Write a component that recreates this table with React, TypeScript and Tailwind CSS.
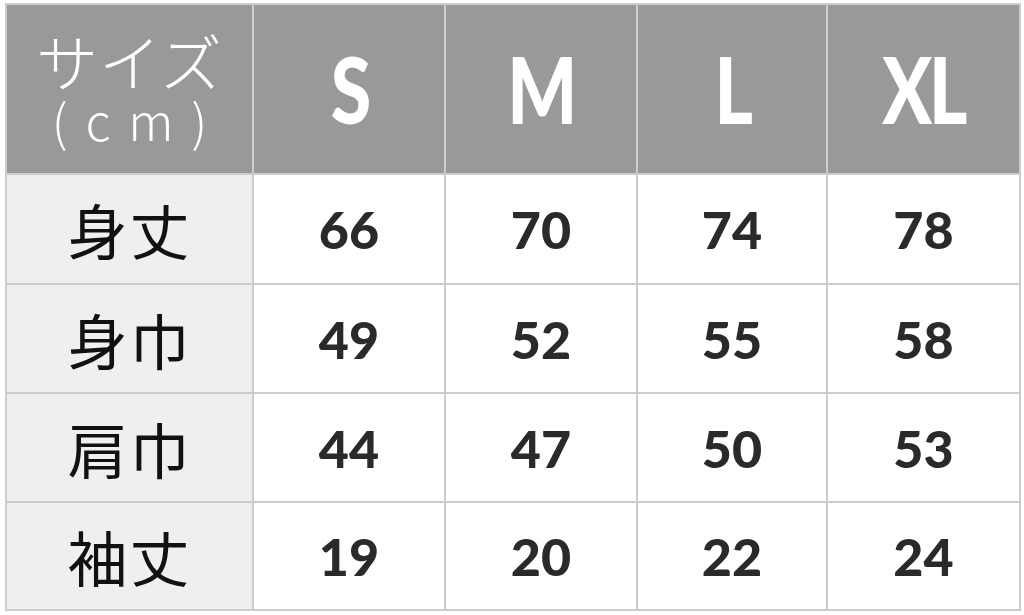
import React from 'react';

const SIZES = ['S', 'M', 'L', 'XL'];

const ROWS: { label: string; values: number[] }[] = [
  { label: '身丈', values: [66, 70, 74, 78] },
  { label: '身巾', values: [49, 52, 55, 58] },
  { label: '肩巾', values: [44, 47, 50, 53] },
  { label: '袖丈', values: [19, 20, 22, 24] },
];

const jp = "font-['Noto_Sans_CJK_JP',sans-serif]";
const num = "font-['Lato','Noto_Sans',sans-serif]";

export default function App() {
  return (
    <div className="w-[1024px] h-[615px] bg-white overflow-hidden pt-[3px] pl-[5px]">
      <div className="grid w-[1016px] grid-cols-[245px_190px_190px_188px_191px] grid-rows-[168px_108px_107px_107px_106px] gap-[2px] bg-[#cccccc] p-[2px]">
        {/* Header */}
        <div className={`bg-[#999999] flex flex-col items-center justify-center gap-[2px] text-white ${jp}`}>
          <span className="text-[62px] leading-[58px] font-light tracking-[1px]">サイズ</span>
          <span className="text-[50px] leading-[56px] font-light tracking-[18px] pl-[18px]">(cm)</span>
        </div>
        {SIZES.map(s => (
          <div
            key={s}
            className={`bg-[#999999] flex items-center justify-center text-white text-[92px] font-black leading-none tracking-[-4px] ${num}`}
          >
            <span className="scale-x-[0.8]">{s}</span>
          </div>
        ))}

        {/* Body */}
        {ROWS.map(r => (
          <React.Fragment key={r.label}>
            <div className={`bg-[#efefef] flex items-center justify-center text-[#111111] text-[60px] tracking-[2px] ${jp}`}>
              {r.label}
            </div>
            {r.values.map((v, i) => (
              <div
                key={i}
                className={`bg-white flex items-center justify-center text-[#2a2a2a] text-[52px] font-black ${num}`}
              >
                {v}
              </div>
            ))}
          </React.Fragment>
        ))}
      </div>
    </div>
  );
}
